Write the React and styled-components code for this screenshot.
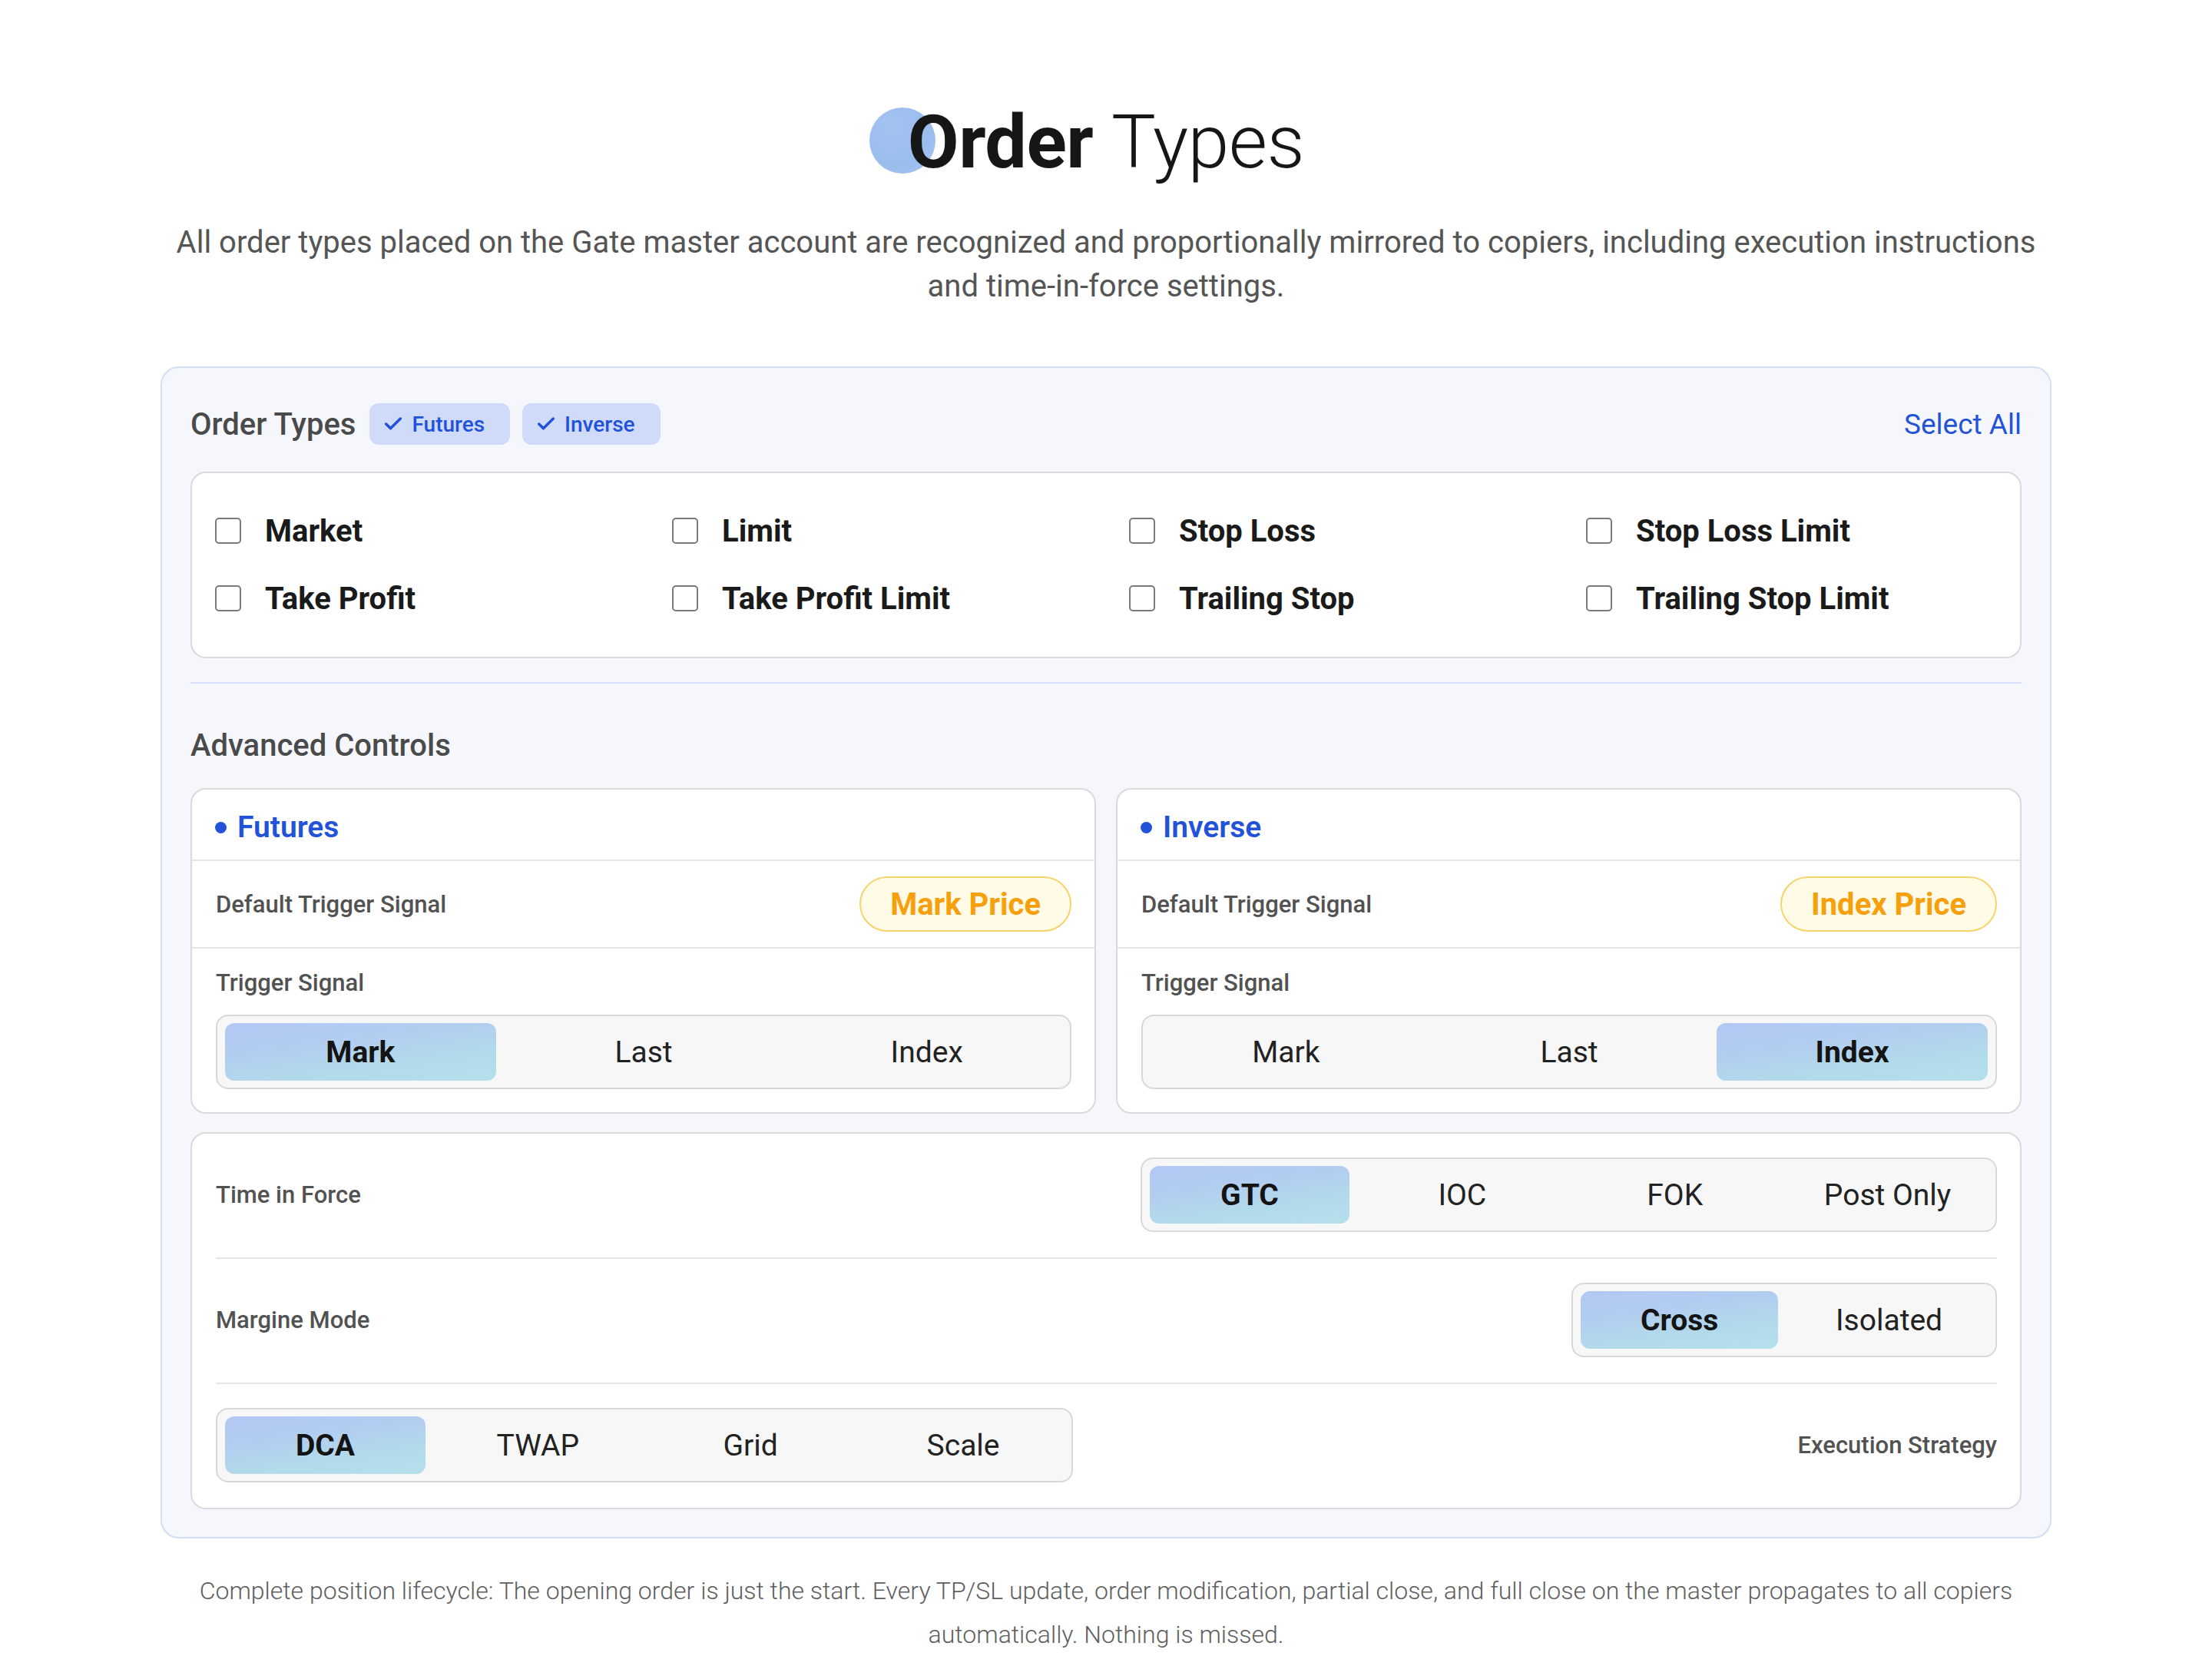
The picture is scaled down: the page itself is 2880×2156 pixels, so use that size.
import styled, { createGlobalStyle } from 'styled-components';
import { Check } from 'lucide-react';

const GlobalStyle = createGlobalStyle`
  body {
    margin: 0;
    background: #ffffff;
    font-family: Roboto, "Liberation Sans", sans-serif;
    color: #1a1a1a;
  }
`;

const Page = styled.div`
  max-width: 2462px;
  margin: 0 auto;
  padding: 126px 0 40px;
  display: flex;
  flex-direction: column;
  align-items: center;
`;

const Title = styled.h1`
  position: relative;
  isolation: isolate;
  margin: 0;
  font-size: 97px;
  line-height: 118px;
  font-weight: 700;
  color: #161616;
  letter-spacing: -0.5px;

  &::before {
    content: '';
    position: absolute;
    z-index: -1;
    left: -50px;
    top: 14px;
    width: 86px;
    height: 86px;
    border-radius: 50%;
    background: radial-gradient(circle at 35% 30%, #a4c3f0 0%, #9abdee 60%, #a9c8f1 100%);
  }

  span {
    font-weight: 300;
  }
`;

const Subtitle = styled.p`
  margin: 43px 0 0;
  font-size: 40px;
  line-height: 57px;
  color: #555;
  text-align: center;
`;

const Panel = styled.section`
  box-sizing: border-box;
  width: 100%;
  margin-top: 76px;
  padding: 46px 37px 36px;
  background: #f6f7fd;
  border: 2px solid #d4def8;
  border-radius: 24px;
`;

const HeaderRow = styled.div`
  display: flex;
  align-items: center;
  justify-content: space-between;
`;

const HeaderLeft = styled.div`
  display: flex;
  align-items: center;
  gap: 16px;
`;

const PanelTitle = styled.h2`
  margin: 0 2px 0 0;
  font-size: 40px;
  font-weight: 500;
  color: #4a4a4a;
`;

const Chip = styled.span`
  display: inline-flex;
  align-items: center;
  gap: 10px;
  height: 54px;
  padding: 0 33px 0 17px;
  border-radius: 12px;
  background: #cfdbf9;
  color: #2152d9;
  font-size: 28px;
  font-weight: 500;
`;

const SelectAll = styled.button`
  border: none;
  background: none;
  padding: 0;
  font-family: inherit;
  font-size: 37px;
  color: #2453d8;
  cursor: pointer;
`;

const Card = styled.div`
  box-sizing: border-box;
  background: #ffffff;
  border: 2px solid #dadada;
  border-radius: 20px;
`;

const CheckGrid = styled(Card)`
  margin-top: 35px;
  padding: 51px 30px 52px;
  display: grid;
  grid-template-columns: repeat(4, 1fr);
  column-gap: 60px;
  row-gap: 40px;
`;

const CheckItem = styled.label`
  display: flex;
  align-items: center;
  gap: 31px;
  height: 48px;
  font-size: 40px;
  font-weight: 700;
  color: #1a1a1a;
`;

const Box = styled.span`
  box-sizing: border-box;
  width: 34px;
  height: 34px;
  border: 2px solid #7a7a7a;
  border-radius: 5px;
  background: #fff;
  flex-shrink: 0;
`;

const Divider = styled.hr`
  margin: 31px 0 0;
  border: none;
  border-top: 2px solid #d6e0f8;
`;

const SectionTitle = styled.h3`
  margin: 57px 0 0;
  font-size: 40px;
  line-height: 48px;
  font-weight: 500;
  color: #4a4a4a;
`;

const TwoCols = styled.div`
  margin-top: 31px;
  display: grid;
  grid-template-columns: 1fr 1fr;
  gap: 26px;
`;

const CardHead = styled.div`
  display: flex;
  align-items: center;
  gap: 14px;
  height: 93px;
  padding: 7px 30px 0 30px;
  box-sizing: border-box;
  border-bottom: 2px solid #e6e6e6;
  color: #2152d9;
  font-size: 39px;
  font-weight: 600;

  &::before {
    content: '';
    width: 15px;
    height: 15px;
    border-radius: 50%;
    background: #2152d9;
  }
`;

const SignalRow = styled.div`
  display: flex;
  align-items: center;
  justify-content: space-between;
  height: 114px;
  padding: 0 30px 0 31px;
  box-sizing: border-box;
  border-bottom: 2px solid #e6e6e6;
`;

const Label = styled.span`
  font-size: 31px;
  font-weight: 500;
  color: #525252;
`;

const Pill = styled.span`
  display: inline-flex;
  align-items: center;
  height: 72px;
  box-sizing: border-box;
  padding: 0 38px;
  border: 2px solid #f6d46a;
  border-radius: 36px;
  background: #fffbe6;
  color: #f5a00c;
  font-size: 40px;
  font-weight: 700;
`;

const TriggerBlock = styled.div`
  display: flex;
  flex-direction: column;
  gap: 23px;
  padding: 26px 30px 30px 31px;
`;

const Seg = styled.div`
  box-sizing: border-box;
  width: ${(p) => p.$width || '100%'};
  display: grid;
  grid-template-columns: repeat(${(p) => p.$count}, 1fr);
  gap: 16px;
  padding: 9px 10px;
  background: #f7f7f7;
  border: 2px solid #d8d8d8;
  border-radius: 16px;
`;

const SegItem = styled.div`
  display: flex;
  align-items: center;
  justify-content: center;
  height: 75px;
  border-radius: 12px;
  font-size: 39px;
  font-weight: ${(p) => (p.$active ? 700 : 400)};
  color: ${(p) => (p.$active ? '#141414' : '#222')};
  background: ${(p) =>
    p.$active
      ? 'linear-gradient(172deg, #b3c7f3 0%, #b2cdf0 35%, #b2dbea 70%, #b3dfea 100%)'
      : 'transparent'};
`;

const BottomCard = styled(Card)`
  margin-top: 24px;
  padding: 0 30px 0 31px;
`;

const OptionRow = styled.div`
  display: flex;
  align-items: center;
  justify-content: space-between;
  padding: 31px 0 33px;
  border-bottom: 2px solid #e6e6e6;

  &:last-child {
    border-bottom: none;
  }
`;

const Footer = styled.p`
  margin: 40px 0 0;
  padding: 0 40px;
  font-size: 32px;
  line-height: 57px;
  font-weight: 300;
  color: #5e5e5e;
  text-align: center;
`;

const Segmented = ({ items, active, width }) => (
  <Seg $count={items.length} $width={width}>
    {items.map((it) => (
      <SegItem key={it} $active={it === active}>
        {it}
      </SegItem>
    ))}
  </Seg>
);

const orderTypes = [
  'Market',
  'Limit',
  'Stop Loss',
  'Stop Loss Limit',
  'Take Profit',
  'Take Profit Limit',
  'Trailing Stop',
  'Trailing Stop Limit',
];

const markets = [
  { name: 'Futures', price: 'Mark Price', active: 'Mark' },
  { name: 'Inverse', price: 'Index Price', active: 'Index' },
];

export default function App() {
  return (
    <>
      <GlobalStyle />
      <Page>
        <Title>
          Order <span>Types</span>
        </Title>
        <Subtitle>
          All order types placed on the Gate master account are recognized and proportionally mirrored to
          copiers, including execution instructions and time-in-force settings.
        </Subtitle>

        <Panel>
          <HeaderRow>
            <HeaderLeft>
              <PanelTitle>Order Types</PanelTitle>
              <Chip>
                <Check size={28} strokeWidth={3} />
                Futures
              </Chip>
              <Chip>
                <Check size={28} strokeWidth={3} />
                Inverse
              </Chip>
            </HeaderLeft>
            <SelectAll>Select All</SelectAll>
          </HeaderRow>

          <CheckGrid>
            {orderTypes.map((t) => (
              <CheckItem key={t}>
                <Box />
                {t}
              </CheckItem>
            ))}
          </CheckGrid>

          <Divider />
          <SectionTitle>Advanced Controls</SectionTitle>

          <TwoCols>
            {markets.map((m) => (
              <Card key={m.name}>
                <CardHead>{m.name}</CardHead>
                <SignalRow>
                  <Label>Default Trigger Signal</Label>
                  <Pill>{m.price}</Pill>
                </SignalRow>
                <TriggerBlock>
                  <Label>Trigger Signal</Label>
                  <Segmented items={['Mark', 'Last', 'Index']} active={m.active} />
                </TriggerBlock>
              </Card>
            ))}
          </TwoCols>

          <BottomCard>
            <OptionRow>
              <Label>Time in Force</Label>
              <Segmented items={['GTC', 'IOC', 'FOK', 'Post Only']} active="GTC" width="calc(50% - 44px)" />
            </OptionRow>
            <OptionRow>
              <Label>Margine Mode</Label>
              <Segmented items={['Cross', 'Isolated']} active="Cross" width="calc(25% - 26px)" />
            </OptionRow>
            <OptionRow>
              <Segmented items={['DCA', 'TWAP', 'Grid', 'Scale']} active="DCA" width="calc(50% - 44px)" />
              <Label>Execution Strategy</Label>
            </OptionRow>
          </BottomCard>
        </Panel>

        <Footer>
          Complete position lifecycle: The opening order is just the start. Every TP/SL update, order
          modification, partial close, and full close on the master propagates to all copiers automatically.
          Nothing is missed.
        </Footer>
      </Page>
    </>
  );
}
